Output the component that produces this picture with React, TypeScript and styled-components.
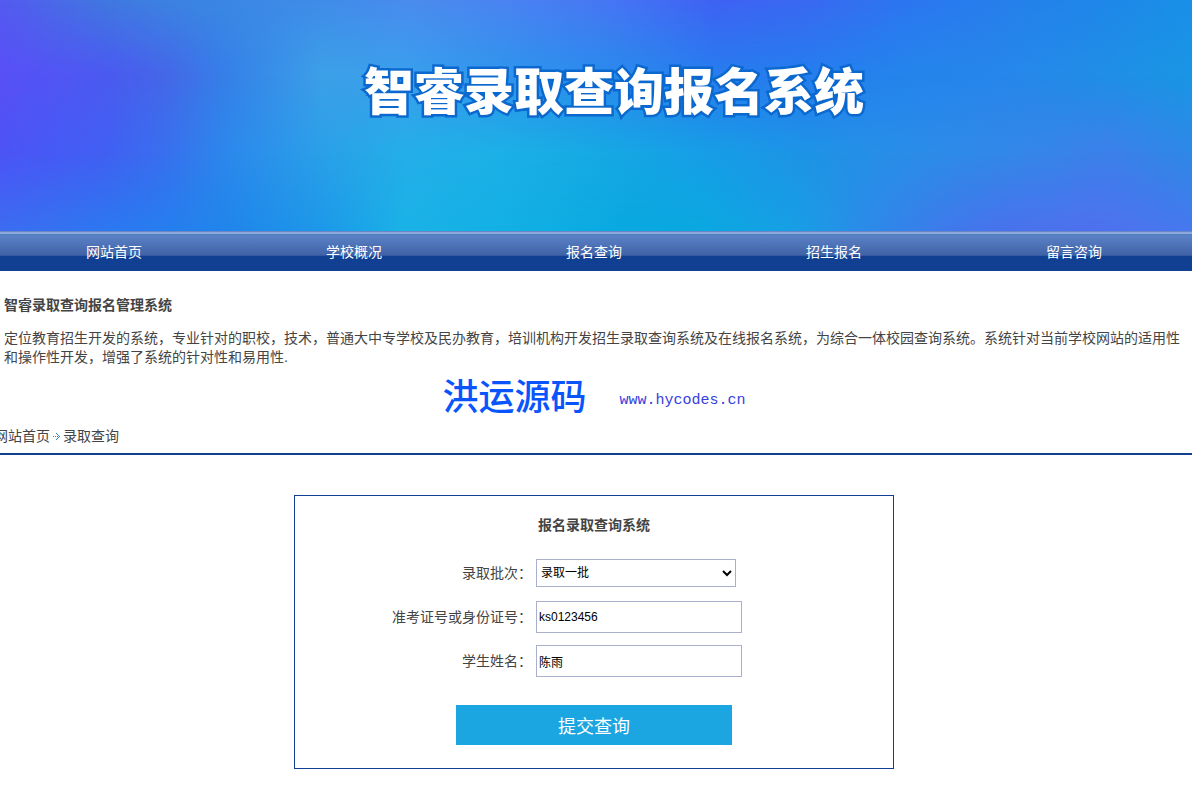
import React from "react";
import styled, { createGlobalStyle } from "styled-components";

const GlobalStyle = createGlobalStyle`
  * {
    box-sizing: border-box;
  }
  body {
    margin: 0;
    background: #fff;
    color: #444;
    font-family: "Liberation Sans", "Noto Sans CJK SC", sans-serif;
    font-size: 14px;
    line-height: 20px;
    overflow-x: hidden;
  }
  input, select, button {
    font-family: inherit;
    margin: 0;
  }
`;

const Banner = styled.header`
  position: relative;
  height: 231px;
  padding-top: 63px;
  padding-left: 36px;
  text-align: center;
`;

/* One horizontal colour band of the banner; it fades in between two heights over the band before it. */
const ColourBand = styled.div<{ $colours: string; $from: number; $to: number }>`
  position: absolute;
  inset: 0;
  background: linear-gradient(90deg, ${(p) => p.$colours});
  mask-image: linear-gradient(transparent ${(p) => p.$from}%, #000 ${(p) => p.$to}%);
`;

const BannerTitle = styled.h1`
  position: relative;
  margin: 0;
  color: #fff;
  font-size: 50px;
  line-height: 60px;
  font-weight: 900;
  white-space: nowrap;
  -webkit-text-stroke: 5px #0b68cf;
  paint-order: stroke fill;
`;

const NavBar = styled.nav`
  height: 40px;
  overflow: hidden;
  background: linear-gradient(
    #6b86c4 0 1px,
    #8ea8dc 1px 3px,
    #5080bc 3px 4px,
    #5a80c6 5px,
    #4163a6 24px,
    #3459a2 24px 25px,
    #114093 25px
  );
`;

const NavList = styled.div`
  display: grid;
  grid-template-columns: repeat(5, 1fr);
  margin: 0 -2px 0 -6px;
`;

const NavLink = styled.a`
  color: #fff;
  line-height: 42px;
  text-align: center;
  text-decoration: none;
`;

const Shell = styled.main`
  margin: 0 -2px 0 -6px;
`;

const Intro = styled.section`
  padding: 24px 10px 0;
`;

const IntroTitle = styled.h2`
  margin: 0 0 14px;
  font-size: 14px;
  line-height: 20px;
`;

const IntroText = styled.p`
  margin: 0;
  line-height: 19px;
`;

const Brand = styled.div`
  display: flex;
  justify-content: center;
  align-items: center;
  gap: 33px;
  height: 40px;
  margin-top: 7px;
`;

const BrandName = styled.strong`
  color: #0a55fb;
  font-family: "Noto Sans CJK SC", sans-serif;
  font-size: 36px;
  line-height: 40px;
  font-weight: 500;
`;

const BrandUrl = styled.a`
  padding-top: 14px;
  color: #3540dd;
  font-family: "Liberation Mono", monospace;
  font-size: 15px;
  line-height: 20px;
  text-decoration: none;
`;

const Breadcrumb = styled.nav`
  display: flex;
  align-items: center;
  height: 40px;
  padding-top: 4px;
  margin-top: 1px;
  border-bottom: 2px solid #114093;

  a {
    color: inherit;
    text-decoration: none;
  }
  svg {
    margin: 0 2px 0 3px;
  }
`;

const QueryForm = styled.form`
  max-width: 600px;
  margin: 40px auto 20px;
  padding: 19px 0 23px;
  border: 1px solid #114093;
`;

const FormTitle = styled.h3`
  margin: 0 0 22px;
  font-size: 14px;
  line-height: 20px;
  text-align: center;
`;

const Field = styled.div`
  display: grid;
  grid-template-columns: 237px 1fr;
  column-gap: 4px;
  align-items: center;
  height: 32px;
  margin-bottom: 12px;

  label {
    text-align: right;
  }
`;

const SelectBox = styled.select`
  width: 200px;
  height: 28px;
  padding: 0;
  border: 1px solid #aab0cc;
  border-radius: 0;
  background: #fff;
  color: #000;
  font-size: 12px;
`;

const TextBox = styled.input`
  width: 206px;
  height: 32px;
  padding: 0 2px;
  border: 1px solid #aab0cc;
  color: #000;
  font-size: 12px;
`;

const SubmitButton = styled.button`
  display: block;
  width: 276px;
  height: 40px;
  margin: 28px auto 0;
  padding: 0;
  border: 0;
  background: #1ba5e1;
  color: #fff;
  font-size: 18px;
`;

const NAV_ITEMS = ["网站首页", "学校概况", "报名查询", "招生报名", "留言咨询"];

const BANDS = [
  {
    from: -2,
    to: -1,
    colours:
      "#545af0, #4078e0 9%, #3c82e2 14%, #3a88e4 19%, #3f8ce8 27%, #4a8cee 34%, #4a84f2 42%, #4674f4 52%, #3e62f4 60%, #3a68f2 67%, #2c76f0 76%, #267fec 84%, #1e88e8 93%, #1a90e8",
  },
  {
    from: 0,
    to: 31,
    colours:
      "#5850f6, #4a5af0 9%, #4468e8 14%, #3580e8 19%, #3c9fe8 27%, #3a9eec 34%, #3094ec 42%, #2a88ec 52%, #287cee 60%, #267cee 67%, #2484ec 76%, #2786ea 84%, #208ee6 93%, #1995e4",
  },
  {
    from: 33,
    to: 66,
    colours:
      "#4c54f6, #4060f2 9%, #3870ee 14%, #2c88ec 19%, #2aa0e8 27%, #24aee8 34%, #1cb0e6 42%, #16a8e4 51%, #169ee6 59%, #1d94e6 67%, #2a8de8 76%, #3288e8 84%, #3c80ea 93%, #2e88e6",
  },
  {
    from: 66,
    to: 100,
    colours:
      "#3c6cf0, #2c78f0 9%, #257eee 14%, #2085ea 19%, #1c98e8 27%, #1ab2e6 34%, #12b0e4 42%, #08a8e0 53%, #0aa8e0 59%, #189ee4 67%, #2a8ce8 72%, #4078ea 80%, #4872ec 84%, #4f70ee 92%, #4678ee",
  },
];

function ArrowIcon() {
  return (
    <svg width="8" height="9" viewBox="0 0 8 9" fill="#2f86c8" aria-hidden="true">
      <path d="M0 4h1v1H0zM2 4h1v1H2zM4 4h1v1H4zM6 4h1v1H6zM3 1h1v1H3zM4 2h1v1H4zM5 3h1v1H5zM5 5h1v1H5zM4 6h1v1H4zM3 7h1v1H3z" />
    </svg>
  );
}

export default function App() {
  return (
    <>
      <GlobalStyle />
      <Banner>
        {BANDS.map((band) => (
          <ColourBand key={band.to} $from={band.from} $to={band.to} $colours={band.colours} />
        ))}
        <BannerTitle>智睿录取查询报名系统</BannerTitle>
      </Banner>
      <NavBar>
        <NavList>
          {NAV_ITEMS.map((item) => (
            <NavLink href="#" key={item}>
              {item}
            </NavLink>
          ))}
        </NavList>
      </NavBar>
      <Shell>
        <Intro>
          <IntroTitle>智睿录取查询报名管理系统</IntroTitle>
          <IntroText>
            定位教育招生开发的系统，专业针对的职校，技术，普通大中专学校及民办教育，培训机构开发招生录取查询系统及在线报名系统，为综合一体校园查询系统。系统针对当前学校网站的适用性和操作性开发，增强了系统的针对性和易用性.
          </IntroText>
        </Intro>
        <Brand>
          <BrandName>洪运源码</BrandName>
          <BrandUrl href="#">www.hycodes.cn</BrandUrl>
        </Brand>
        <Breadcrumb>
          <a href="#">网站首页</a>
          <ArrowIcon />
          <span>录取查询</span>
        </Breadcrumb>
        <QueryForm onSubmit={(event) => event.preventDefault()}>
          <FormTitle>报名录取查询系统</FormTitle>
          <Field>
            <label htmlFor="batch">录取批次：</label>
            <SelectBox id="batch" defaultValue="录取一批">
              <option>录取一批</option>
            </SelectBox>
          </Field>
          <Field>
            <label htmlFor="number">准考证号或身份证号：</label>
            <TextBox id="number" type="text" defaultValue="ks0123456" />
          </Field>
          <Field>
            <label htmlFor="student">学生姓名：</label>
            <TextBox id="student" type="text" defaultValue="陈雨" />
          </Field>
          <SubmitButton type="submit">提交查询</SubmitButton>
        </QueryForm>
      </Shell>
    </>
  );
}
